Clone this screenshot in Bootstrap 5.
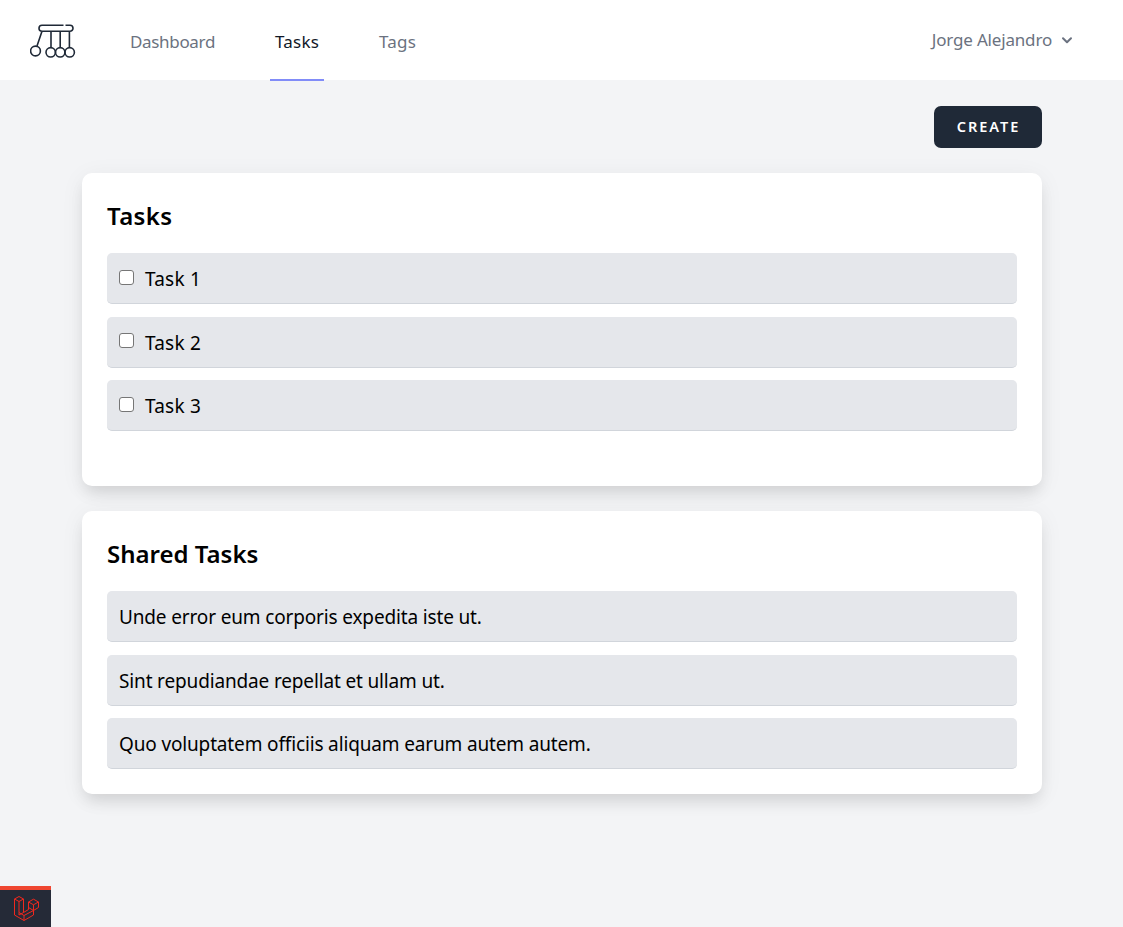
<!DOCTYPE html>
<html lang="en">
<head>
<meta charset="utf-8">
<meta name="viewport" content="width=device-width, initial-scale=1">
<title>Tasks</title>
<link href="https://cdn.jsdelivr.net/npm/bootstrap@5.3.0/dist/css/bootstrap.min.css" rel="stylesheet">
<style>
body{font-family:"Noto Sans",sans-serif;background:#f3f4f6;color:#000;min-height:927px;overflow:hidden}
.topbar{height:80px;padding:0 49px 0 30px;background:#fff}
.logo{width:46px;height:36px;margin-top:3px}
.topbar .nav-link{height:81px;padding:4px 5px 0;line-height:76px;font-size:17px;color:#6b7280;border-bottom:2px solid transparent;letter-spacing:.2px}
.topbar .nav-link:first-child{letter-spacing:-.33px}
.topbar .nav-link.active{color:#111827;border-color:#818cf8}
.menu{gap:50px;margin-left:49px;height:80px}
.user{font-size:17px;color:#6b7280;line-height:80px;letter-spacing:-.18px}
.page{width:960px;margin:26px 0 0 82px}
.btn-create{width:108px;height:42px;background:#1f2937;color:#fff;border:0;border-radius:7px;font-size:14.5px;font-weight:600;letter-spacing:2px;padding:0 0 0 1px}
.panel{background:#fff;border:0;border-radius:10px;padding:25px;margin-top:25px;box-shadow:0 4px 25px rgba(0,0,0,.06),0 10px 15px -3px rgba(0,0,0,.1)}
.panel h2{font-size:24px;font-weight:600;line-height:36px;margin:0 0 19px}
.own h2{letter-spacing:.4px}
.item{height:51px;background:#e5e7eb;border-bottom:1px solid #d1d5db;border-radius:5px;padding:3px 12px 0;font-size:19px;margin-bottom:12.5px;letter-spacing:-.15px}
.own .item{letter-spacing:.2px}
.item:last-child{margin-bottom:0}
.item input{width:15px;height:15px;margin:0 11px 5px 0;border:1px solid #767676;border-radius:3px;appearance:none;background:#fff}
.own{height:313px}
.debug{left:0;bottom:0;width:51px;height:41px;padding-left:2px;background:#252a37;border-top:4px solid #ef4631}
</style>
</head>
<body>
<nav class="topbar d-flex align-items-center">
  <svg class="logo" viewBox="0 0 46 36" fill="none" stroke="#1f2937" stroke-width="1.6"><path d="M33.500 1.200H12a3 3 0 0 0 0 6h28a3 3 0 0 0 0-6h-4.500M12 7.200 7 22M21 7.200V23.500M30.200 7.200V23.500M39.400 7.200V23.500"/><circle cx="5.500" cy="27" r="4.900"/><circle cx="20.700" cy="28.300" r="4.700"/><circle cx="30.200" cy="28.300" r="4.700"/><circle cx="39.700" cy="28.300" r="4.700"/></svg>
  <div class="menu nav flex-nowrap align-self-start">
    <a class="nav-link" href="#">Dashboard</a>
    <a class="nav-link active" href="#">Tasks</a>
    <a class="nav-link" href="#">Tags</a>
  </div>
  <div class="user ms-auto d-flex align-items-center"><span>Jorge Alejandro</span>
    <svg class="ms-2" width="14" height="14" viewBox="0 0 14 14" fill="none" stroke="#6b7280" stroke-width="2" stroke-linecap="round" stroke-linejoin="round"><path d="M3 5.200 7 9.200 11 5.200"/></svg></div>
</nav>
<main class="page">
  <div class="d-flex justify-content-end"><button class="btn btn-create">CREATE</button></div>
  <section class="panel own">
    <h2>Tasks</h2>
    <div class="item d-flex align-items-center"><input type="checkbox"><span>Task 1</span></div>
    <div class="item d-flex align-items-center"><input type="checkbox"><span>Task 2</span></div>
    <div class="item d-flex align-items-center"><input type="checkbox"><span>Task 3</span></div>
  </section>
  <section class="panel">
    <h2>Shared Tasks</h2>
    <div class="item d-flex align-items-center"><span>Unde error eum corporis expedita iste ut.</span></div>
    <div class="item d-flex align-items-center"><span>Sint repudiandae repellat et ullam ut.</span></div>
    <div class="item d-flex align-items-center"><span>Quo voluptatem officiis aliquam earum autem autem.</span></div>
  </section>
</main>
<div class="debug position-fixed d-flex justify-content-center align-items-center">
  <svg width="27" height="27" viewBox="0 0 27 27" fill="none" stroke="#f0281e" stroke-width="1" stroke-linejoin="round"><path d="M1.500 4 6 1.500 10.500 4V17.500L15.500 14.500V7L20.500 4.200 25.500 7V12.500L20.500 15.500V20L11 25.500 1.500 20ZM1.500 4 6 6.500 10.500 4M6 6.500V17.500L11 20.500V25.500M6 17.500V20M11 20.500 20.500 15.500M6 20 10.500 17.500M15.500 7 20.500 9.800 25.500 7M20.500 9.800V15.500L15.500 12.500"/></svg>
</div>
<script src="https://cdn.jsdelivr.net/npm/bootstrap@5.3.0/dist/js/bootstrap.bundle.min.js"></script>
</body>
</html>
